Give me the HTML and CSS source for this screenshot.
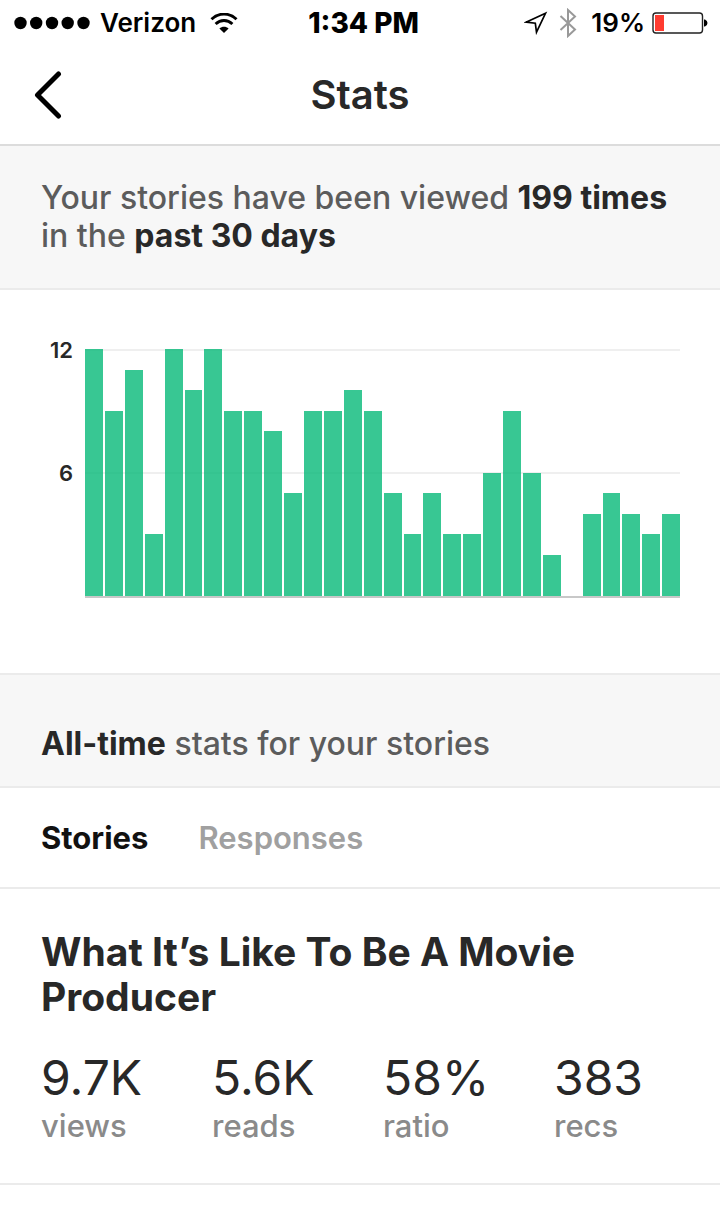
FILE: index.html
```html
<!DOCTYPE html>
<html lang="en">
<head>
<meta charset="utf-8">
<meta name="viewport" content="width=device-width, initial-scale=1">
<title>Stats</title>
<link rel="stylesheet" href="styles.css">
</head>
<body>
<div class="status">
  <div class="status-left">
    <svg class="signal" width="76" height="14" viewBox="0 0 76 14" aria-hidden="true"><circle cx="6.5" cy="7" r="6.2"/><circle cx="22.2" cy="7" r="6.2"/><circle cx="38" cy="7" r="6.2"/><circle cx="53.7" cy="7" r="6.2"/><circle cx="69.5" cy="7" r="6.2"/></svg>
    <span class="carrier">Verizon</span>
    <svg class="wifi" width="28" height="20" viewBox="0 0 28 20" aria-hidden="true"><path d="M1.5 6.2C8.5-.6 19.500-.6 26.500 6.200M5.600 11C10.500 6.400 17.500 6.400 22.400 11" fill="none" stroke="#000" stroke-width="2.900"/><path d="M14 20 L9.400 15.400 C12 13.100 16 13.100 18.600 15.400 Z"/></svg>
  </div>
  <span class="time">1:34 PM</span>
  <div class="status-right">
    <svg class="locate" width="24" height="24" viewBox="0 0 24 24" aria-hidden="true"><path d="M21.500 2.300 L2 11.200 L11.300 12.200 L12.500 21.200 Z" fill="none" stroke="#000" stroke-width="1.700" stroke-linejoin="miter"/></svg>
    <svg class="bluetooth" width="18" height="30" viewBox="0 0 18 30" aria-hidden="true"><path d="M1.500 8 L16 21.500 L9 28 V2 L16 8.500 L1.500 22" fill="none" stroke="#999" stroke-width="2"/></svg>
    <span class="percent">19%</span>
    <svg class="battery" width="56" height="22" viewBox="0 0 56 22" aria-hidden="true"><rect x="1" y="1" width="49.500" height="20" rx="3" fill="none" stroke="#222" stroke-width="1.400"/><rect x="3" y="3" width="9" height="16" fill="#ff3b30"/><path d="M52 7.500 H53 Q55.500 8.500 55.500 11 T53 14.500 H52 Z"/></svg>
  </div>
</div>

<header class="header">
  <button class="back" type="button" aria-label="Back">
    <svg width="28" height="48" viewBox="0 0 28 48" aria-hidden="true"><path d="M24.500 3 L3.500 24 L24.500 45" fill="none" stroke="#000" stroke-width="5" stroke-linecap="round" stroke-linejoin="round"/></svg>
  </button>
  <h1 class="title">Stats</h1>
</header>

<main>
  <p class="band summary">Your stories have been viewed <strong>199 times</strong> in the <strong>past 30 days</strong></p>

  <section class="chart" aria-label="Views in the past 30 days">
    <div class="axis"><span>12</span><span>6</span></div>
    <div class="plot">
      <i class="bar" style="--v:12"></i><i class="bar" style="--v:9"></i><i class="bar" style="--v:11"></i><i class="bar" style="--v:3"></i><i class="bar" style="--v:12"></i>
      <i class="bar" style="--v:10"></i><i class="bar" style="--v:12"></i><i class="bar" style="--v:9"></i><i class="bar" style="--v:9"></i><i class="bar" style="--v:8"></i>
      <i class="bar" style="--v:5"></i><i class="bar" style="--v:9"></i><i class="bar" style="--v:9"></i><i class="bar" style="--v:10"></i><i class="bar" style="--v:9"></i>
      <i class="bar" style="--v:5"></i><i class="bar" style="--v:3"></i><i class="bar" style="--v:5"></i><i class="bar" style="--v:3"></i><i class="bar" style="--v:3"></i>
      <i class="bar" style="--v:6"></i><i class="bar" style="--v:9"></i><i class="bar" style="--v:6"></i><i class="bar" style="--v:2"></i><i class="bar" style="--v:0"></i>
      <i class="bar" style="--v:4"></i><i class="bar" style="--v:5"></i><i class="bar" style="--v:4"></i><i class="bar" style="--v:3"></i><i class="bar" style="--v:4"></i>
    </div>
  </section>

  <h2 class="band alltime"><strong>All-time</strong> stats for your stories</h2>

  <nav class="tabs">
    <a class="tab active" href="#stories" aria-current="page">Stories</a>
    <a class="tab" href="#responses">Responses</a>
  </nav>

  <article class="story" id="stories">
    <h3 class="story-title">What It’s Like To Be A Movie Producer</h3>
    <dl class="metrics">
      <div class="metric"><dt>views</dt><dd>9.7K</dd></div>
      <div class="metric"><dt>reads</dt><dd>5.6K</dd></div>
      <div class="metric"><dt>ratio</dt><dd>58%</dd></div>
      <div class="metric"><dt>recs</dt><dd>383</dd></div>
    </dl>
  </article>
</main>
</body>
</html>
```

FILE: styles.css
```css
* { box-sizing: border-box; }

body {
  margin: 0;
  background: #fff;
  color: #282828;
  font: 500 31px/38px Inter, "Liberation Sans", sans-serif;
}

h1, h2, h3, p, dl, dd { margin: 0; }
strong { font-weight: 700; color: #282828; }

.status {
  display: flex;
  align-items: center;
  height: 46px;
  padding: 0 12px 0 14px;
  color: #000;
  font-size: 26px;
  font-weight: 600;
  line-height: 46px;
}
.status-left, .status-right { display: flex; align-items: center; }
.carrier { margin: 0 14px 0 10px; }
.time { margin-left: 70px; font-size: 28px; font-weight: 800; }
.status-right { margin-left: auto; }
.locate { margin-right: 11px; }
.bluetooth { margin-right: 14px; }
.percent { margin-right: 7px; }

.header {
  display: grid;
  grid-template-columns: 1fr auto 1fr;
  align-items: center;
  height: 100px;
  padding: 0 34px;
  border-bottom: 2px solid #dcdcdc;
}
.back {
  display: flex;
  justify-self: start;
  padding: 0;
  border: 0;
  background: none;
}
.title { font-size: 40px; line-height: 46px; font-weight: 600; }

.band {
  background: #f7f7f7;
  border-bottom: 2px solid #ebebeb;
  color: #5c5c5c;
  font-size: 32px;
  font-weight: 500;
}
.summary { padding: 33px 40px 33px 41px; }
.alltime { padding: 50px 40px 23px 41px; border-top: 2px solid #ebebeb; }

.chart {
  display: flex;
  gap: 12px;
  padding: 59px 40px 75px 41px;
}
.axis {
  display: grid;
  grid-template-rows: 1fr 1fr;
  width: 32px;
  height: 246px;
  margin-top: -10px;
  text-align: right;
  font-size: 22px;
  font-weight: 600;
  line-height: 22px;
}
.plot {
  display: flex;
  align-items: flex-end;
  gap: 2px;
  flex: 1;
  height: 249px;
  border-bottom: 2px solid #c8c8c8;
  background:
    linear-gradient(#efefef, #efefef) 0 0 / 100% 2px no-repeat,
    linear-gradient(#efefef, #efefef) 0 50% / 100% 2px no-repeat;
}
.bar {
  flex: 1;
  height: calc(var(--v) / 12 * 100%);
  background: rgba(6, 185, 120, .8);
}

.tabs {
  display: flex;
  gap: 50px;
  padding: 31px 41px 30px;
  border-bottom: 2px solid #ebebeb;
}
.tab { color: #a0a0a0; font-weight: 600; text-decoration: none; }
.tab.active { color: #111; font-weight: 700; }

.story {
  padding: 40px 0 38px 41px;
  border-bottom: 2px solid #ebebeb;
}
.story-title {
  padding-right: 40px;
  font-size: 39px;
  line-height: 45px;
  font-weight: 700;
}
.metrics {
  display: grid;
  grid-template-columns: repeat(3, 1fr) 166px;
  margin-top: 30px;
}
.metric { display: flex; flex-direction: column-reverse; }
.metric dt { color: #8a8a8a; }
.metric dd { font-size: 48px; line-height: 58px; font-weight: 400; }
```
